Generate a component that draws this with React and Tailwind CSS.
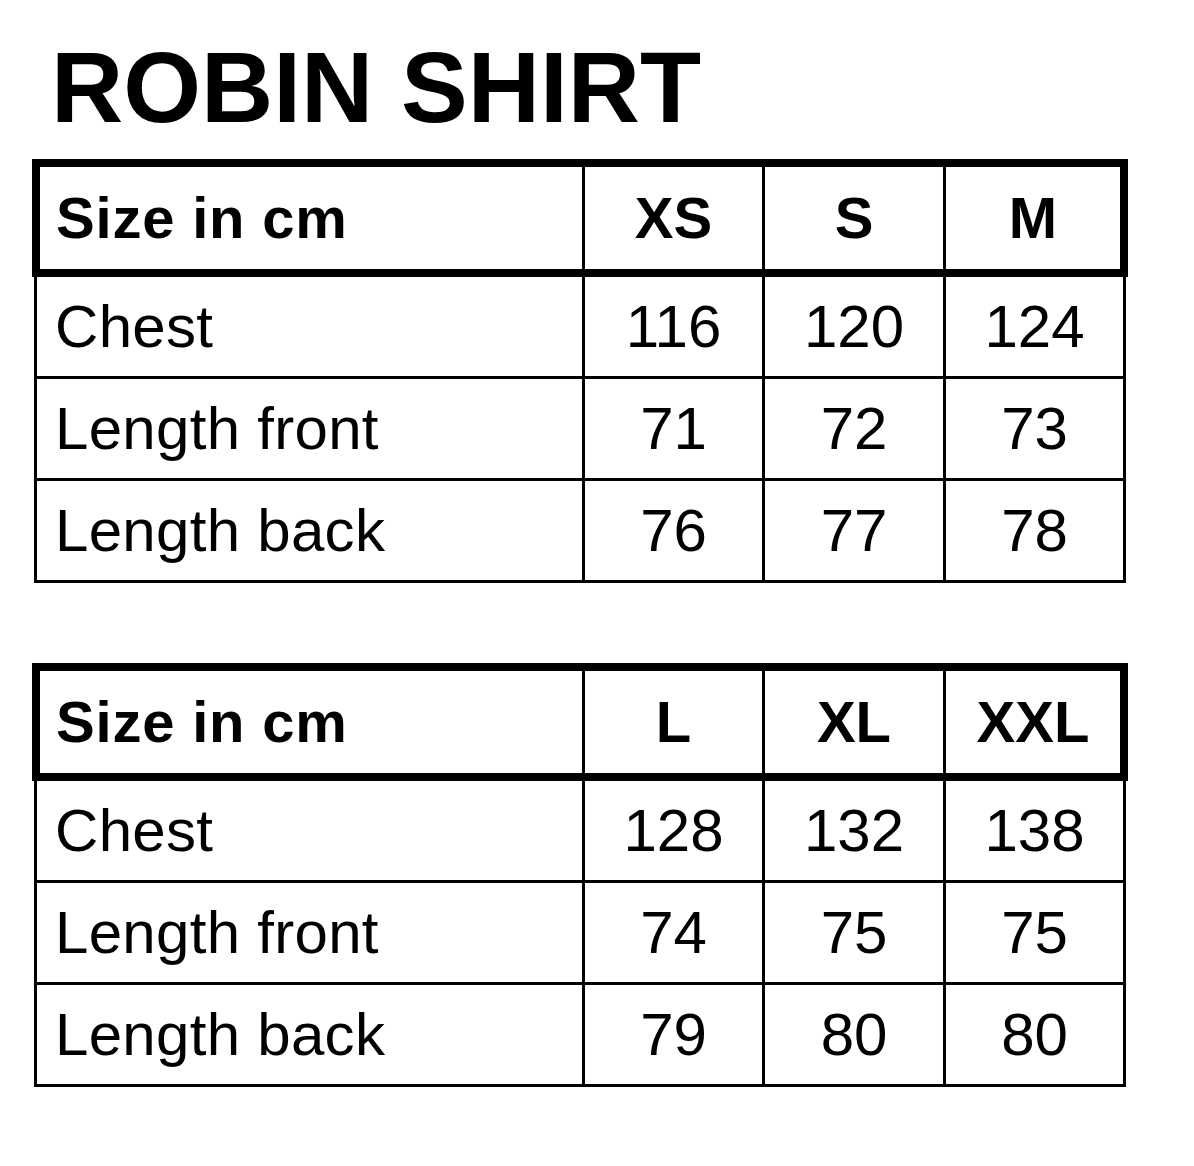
import React from "react";

const font = { fontFamily: '"Liberation Sans", Arial, Helvetica, sans-serif' };

function SizeTable({ sizes, rows }) {
  return (
    <div className="w-[1092px] ml-[34px]">
      <div className="-mx-[2px] w-[1096px] h-[118px] border-[8px] border-black grid grid-cols-[542px_180px_181px_177px]">
        <div className="flex items-center pl-[16px] text-[58px] font-bold leading-none tracking-[0.8px]">Size in cm</div>
        {sizes.map((s) => (
          <div key={s} className="border-l-[3px] border-black flex items-center justify-center text-[58px] font-bold leading-none">
            {s}
          </div>
        ))}
      </div>
      <div className="border-x-[3px] border-black">
        {rows.map(([label, vals]) => (
          <div key={label} className="h-[102px] border-b-[3px] border-black grid grid-cols-[545px_180px_181px_180px]">
            <div className="flex items-center pl-[18px] text-[60px] leading-none tracking-[0.3px]">{label}</div>
            {vals.map((v, i) => (
              <div key={i} className="border-l-[3px] border-black flex items-center justify-center text-[60px] leading-none">
                {v}
              </div>
            ))}
          </div>
        ))}
      </div>
    </div>
  );
}

export default function App() {
  return (
    <div className="w-[1194px] h-[1166px] bg-white text-black" style={font}>
      <div className="h-[159px] pt-[37px] pl-[51px]">
        <div className="text-[100px] font-bold leading-none">ROBIN SHIRT</div>
      </div>
      <SizeTable
        sizes={["XS", "S", "M"]}
        rows={[
          ["Chest", ["116", "120", "124"]],
          ["Length front", ["71", "72", "73"]],
          ["Length back", ["76", "77", "78"]],
        ]}
      />
      <div className="h-[80px]" />
      <SizeTable
        sizes={["L", "XL", "XXL"]}
        rows={[
          ["Chest", ["128", "132", "138"]],
          ["Length front", ["74", "75", "75"]],
          ["Length back", ["79", "80", "80"]],
        ]}
      />
    </div>
  );
}
